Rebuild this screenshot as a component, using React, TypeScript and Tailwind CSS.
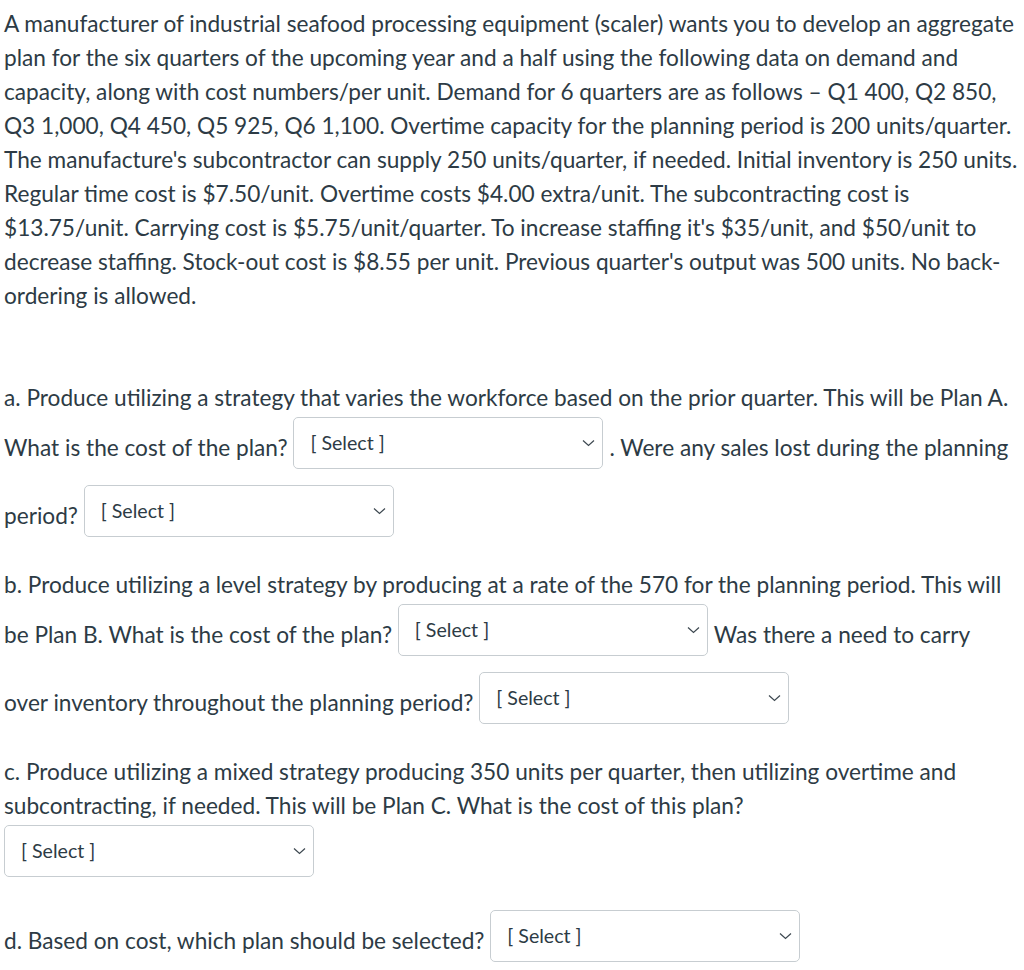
import React from "react";

const font = { fontFamily: "Lato, 'Noto Sans', sans-serif" };

function Pick() {
  return (
    <span className="inline-block align-[-27px] overflow-hidden mt-[2px] mb-[14px] mr-[6px]">
      <span className="flex items-center justify-between w-[310px] h-[52px] border border-[#c7cdd1] rounded-[5px] bg-white pl-[16px] pr-[7px]">
        <span className="text-[19.6px] leading-none text-[#2d3b45]">[ Select ]</span>
        <svg width="13" height="8" viewBox="0 0 13 8" fill="none">
          <path d="M1 1.5L6.5 6.5L12 1.5" stroke="#3d4850" strokeWidth="1.2" />
        </svg>
      </span>
    </span>
  );
}

export default function App() {
  return (
    <div
      className="w-[1018px] bg-white pl-[4px] pt-[7px] text-[22.65px] leading-[34px] text-[#2d3b45] flex flex-col gap-[17px]"
      style={font}
    >
      <p>
        A manufacturer of industrial seafood processing equipment (scaler) wants you to develop an aggregate plan
        for the six quarters of the upcoming year and a half using the following data on demand and capacity, along
        with cost numbers/per unit. Demand for 6 quarters are as follows – Q1 400, Q2 850, Q3 1,000, Q4 450, Q5 925,
        Q6 1,100. Overtime capacity for the planning period is 200 units/quarter. The manufacture's subcontractor can
        supply 250 units/quarter, if needed. Initial inventory is 250 units. Regular time cost is $7.50/unit. Overtime
        costs $4.00 extra/unit. The subcontracting cost is $13.75/unit. Carrying cost is $5.75/unit/quarter. To
        increase staffing it's $35/unit, and $50/unit to decrease staffing. Stock-out cost is $8.55 per unit.
        Previous quarter's output was 500 units. No back-ordering is allowed.
      </p>
      <p>&nbsp;</p>
      <p>
        a. Produce utilizing a strategy that varies the workforce based on the prior quarter. This will be Plan A.
        What is the cost of the plan? <Pick />. Were any sales lost during the planning period? <Pick />
      </p>
      <p>
        b. Produce utilizing a level strategy by producing at a rate of the 570 for the planning period. This will
        be Plan B. What is the cost of the plan? <Pick />
        Was there a need to carry over inventory throughout the planning period? <Pick />
      </p>
      <p>
        c. Produce utilizing a mixed strategy producing 350 units per quarter, then utilizing overtime and
        subcontracting, if needed. This will be Plan C. What is the cost of this plan? <Pick />
      </p>
      <p>
        d. Based on cost, which plan should be selected? <Pick />
      </p>
    </div>
  );
}
